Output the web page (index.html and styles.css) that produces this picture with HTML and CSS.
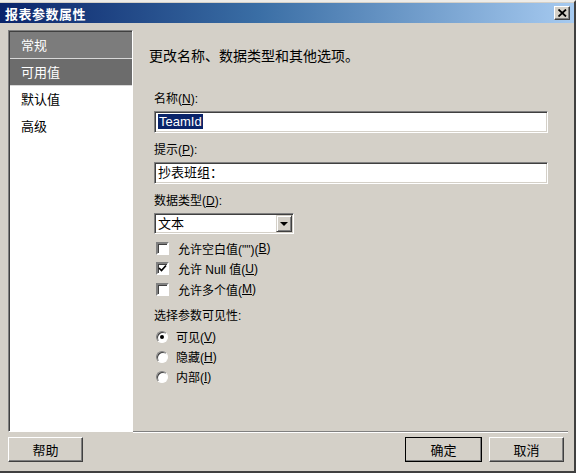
FILE: index.html
```html
<!DOCTYPE html>
<html lang="zh-CN">
<head>
    <meta charset="UTF-8" />
    <title>报表参数属性</title>
    <link rel="stylesheet" href="styles.css">
</head>
<body>
<div class="window">
    <div class="titlebar">
        <span class="title">报表参数属性</span>
        <span class="close">
            <svg width="9" height="8" viewBox="0 0 9 8"><path d="M0.5 0.5 L8 7.5 M8 0.5 L0.5 7.5" stroke="#000" stroke-width="1.8"/></svg>
        </span>
    </div>

    <div class="main">
        <ul class="nav">
            <li class="page">常规</li>
            <li class="page current">可用值</li>
            <li>默认值</li>
            <li>高级</li>
        </ul>

        <div class="pane">
            <h1>更改名称、数据类型和其他选项。</h1>

            <div class="label">名称(<u>N</u>):</div>
            <div class="textbox"><span class="sel">TeamId</span></div>

            <div class="label">提示(<u>P</u>):</div>
            <div class="textbox">抄表班组：</div>

            <div class="label">数据类型(<u>D</u>):</div>
            <div class="combo">
                <span class="combo-text">文本</span>
                <span class="combo-btn"><span class="arrow"></span></span>
            </div>

            <div class="checks">
                <div class="check-row"><span class="checkbox"></span>允许空白值("")(<u>B</u>)</div>
                <div class="check-row"><span class="checkbox">
                    <svg width="9" height="9" viewBox="0 0 9 9"><path d="M1 4 L3.5 6.5 L8 1.5" fill="none" stroke="#000" stroke-width="1.7"/></svg>
                </span>允许 Null 值(<u>U</u>)</div>
                <div class="check-row"><span class="checkbox"></span>允许多个值(<u>M</u>)</div>
            </div>

            <div class="label group">选择参数可见性:</div>
            <div class="radios">
                <div class="radio-row"><span class="radio on"></span>可见(<u>V</u>)</div>
                <div class="radio-row"><span class="radio"></span>隐藏(<u>H</u>)</div>
                <div class="radio-row"><span class="radio"></span>内部(<u>I</u>)</div>
            </div>
        </div>
    </div>

    <div class="buttons">
        <button class="btn">帮助</button>
        <span class="spacer"></span>
        <button class="btn default">确定</button>
        <button class="btn">取消</button>
    </div>
</div>
</body>
</html>
```

FILE: styles.css
```css
body {
    margin: 0;
    background-color: #d4d0c8;
    font-family: "Liberation Sans", "Noto Sans CJK SC", sans-serif;
    font-size: 12px;
    color: #000;
}
.window {
    width: 576px;
    height: 473px;
    box-sizing: border-box;
    border-top: 2px solid #eeece8;
    border-right: 2px solid #404040;
    border-bottom: 2px solid #404040;
    background-color: #d4d0c8;
    display: flex;
    flex-direction: column;
}

/* title bar */
.titlebar {
    height: 20px;
    margin-top: 1px;
    padding: 0 4px 0 5px;
    display: flex;
    align-items: center;
    background: linear-gradient(to right, #0a246a 0%, #3a6ea5 45%, #a6caf0 100%);
}
.title {
    flex: 1;
    color: #fff;
    font-weight: bold;
    font-size: 13px;
    letter-spacing: 0.5px;
}
.close {
    width: 14px;
    height: 12px;
    display: flex;
    align-items: center;
    justify-content: center;
    background-color: #d4d0c8;
    border: 1px solid;
    border-color: #fff #404040 #404040 #fff;
    box-shadow: inset -1px -1px #808080;
}

/* page list + page */
.main {
    flex: 1;
    display: flex;
    padding: 7px 6px 0 8px;
}
.nav {
    list-style: none;
    margin: 0;
    padding: 1px 0 0;
    width: 123px;
    background-color: #fff;
    border: 1px solid;
    border-color: #808080 #fff #fff #808080;
    box-shadow: inset 1px 1px #404040;
}
.nav li {
    height: 27px;
    line-height: 27px;
    padding-left: 11px;
    margin-left: 1px;
    font-size: 13px;
}
.nav li.page {
    background-color: #7c7c7c;
    color: #fff;
    border-bottom: 1px solid #d8d8d8;
    height: 26px;
}
.nav li.current {
    background-color: #6c6c6c;
}
.pane {
    flex: 1;
    padding: 17px 0 0 21px;
    border-bottom: 1px solid #808080;
    box-shadow: 0 1px #fff;
}
h1 {
    margin: 0 0 27px -5px;
    font-size: 14px;
    font-weight: normal;
    line-height: 18px;
}
.label {
    line-height: 14px;
    height: 14px;
    margin-bottom: 5px;
}
.label.group {
    margin-top: 9px;
    margin-bottom: 4px;
}

/* sunken controls */
.textbox {
    width: 389px;
    height: 20px;
    line-height: 20px;
    padding-left: 3px;
    margin-bottom: 10px;
    background-color: #fff;
    border: 1px solid;
    border-color: #808080 #fff #fff #808080;
    box-shadow: inset 1px 1px #404040, inset -1px -1px #d4d0c8;
    font-size: 13px;
}
.sel {
    background-color: #0a246a;
    color: #fff;
    padding: 0 1px;
}
.combo {
    width: 136px;
    height: 17px;
    display: flex;
    background-color: #fff;
    padding: 1px;
    border: 1px solid;
    border-color: #808080 #fff #fff #808080;
    box-shadow: inset 1px 1px #404040, inset -1px -1px #d4d0c8;
}
.combo-text {
    flex: 1;
    line-height: 17px;
    padding-left: 2px;
    font-size: 13px;
}
.combo-btn {
    width: 14px;
    height: 15px;
    display: flex;
    align-items: center;
    justify-content: center;
    background-color: #d4d0c8;
    border: 1px solid;
    border-color: #d4d0c8 #404040 #404040 #d4d0c8;
    box-shadow: inset 1px 1px #fff, inset -1px -1px #808080;
}
.arrow {
    width: 0;
    height: 0;
    border-left: 4px solid transparent;
    border-right: 4px solid transparent;
    border-top: 4px solid #000;
}

/* check boxes and radio buttons */
.checks {
    margin-top: 4px;
}
.check-row, .radio-row {
    height: 20px;
    display: flex;
    align-items: center;
    padding-left: 2px;
}
.check-row {
    height: 20.5px;
}
.checkbox {
    width: 9px;
    height: 9px;
    margin-right: 9px;
    display: flex;
    align-items: center;
    justify-content: center;
    background-color: #fff;
    border: 2px solid;
    border-color: #808080 #fff #fff #808080;
    box-shadow: inset 1px 1px #404040;
}
.radio {
    width: 12px;
    height: 12px;
    margin-right: 8px;
    border-radius: 50%;
    box-sizing: border-box;
    background-color: #fff;
    border: 1px solid;
    border-color: #808080 #fff #fff #808080;
    box-shadow: inset 1px 1px #404040;
    display: flex;
    align-items: center;
    justify-content: center;
}
.radio.on::after {
    content: "";
    width: 4px;
    height: 4px;
    border-radius: 50%;
    background-color: #000;
}

/* bottom buttons */
.buttons {
    height: 34px;
    display: flex;
    align-items: flex-start;
    gap: 7px;
    padding: 5px 10px 0 8px;
}
.spacer {
    flex: 1;
}
.btn {
    width: 75px;
    height: 25px;
    font-family: inherit;
    font-size: 13px;
    background-color: #d4d0c8;
    border: 1px solid;
    border-color: #fff #404040 #404040 #fff;
    box-shadow: inset -1px -1px #808080;
    padding: 0;
}
.btn.default {
    width: 77px;
    outline: 1px solid #000;
    outline-offset: -1px;
}
```
